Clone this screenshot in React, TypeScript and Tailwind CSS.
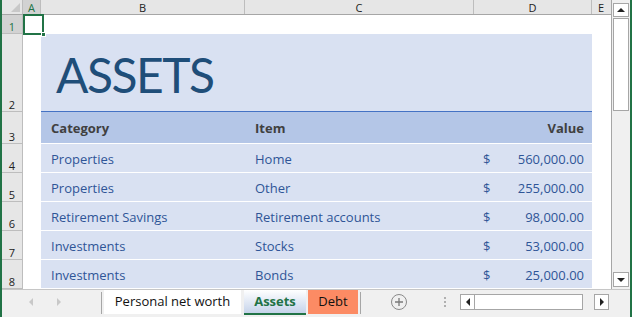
import React from "react";

const rows = [
  { n: 4, c: "Properties", i: "Home", v: "560,000.00" },
  { n: 5, c: "Properties", i: "Other", v: "255,000.00" },
  { n: 6, c: "Retirement Savings", i: "Retirement accounts", v: "98,000.00" },
  { n: 7, c: "Investments", i: "Stocks", v: "53,000.00" },
  { n: 8, c: "Investments", i: "Bonds", v: "25,000.00" },
];

function RowHead({ n, h, sel }: { n: number; h: string; sel?: boolean }) {
  return (
    <div
      className={`${h} w-[21px] shrink-0 flex items-end justify-center pb-[1px] border-r border-b border-[#bdbdbd] text-[11px] leading-none ${
        sel ? "bg-[#d2d2d2] text-[#217346]" : "bg-[#e6e6e6] text-[#222]"
      }`}
    >
      {n}
    </div>
  );
}

export default function App() {
  const font = { fontFamily: '"Open Sans", "Noto Sans", sans-serif' };
  return (
    <div className="w-[632px] h-[317px] flex bg-[#217346] overflow-hidden" style={font}>
      <div className="w-[2px] shrink-0" />
      <div className="w-[628px] flex flex-col bg-[#f0f0f0]">
        <div className="h-[289px] flex">
          {/* sheet */}
          <div className="w-[610px] flex flex-col bg-white border-r border-[#a6a6a6] relative">
            {/* column headers */}
            <div className="h-[15px] flex text-[11px] leading-none bg-[#e6e6e6] border-b border-[#a6a6a6]">
              <div className="w-[21px] shrink-0 border-r border-[#bdbdbd] relative">
                <div className="absolute right-[2px] bottom-[2px] w-0 h-0 border-l-[9px] border-l-transparent border-b-[9px] border-b-[#c8c8c8]" />
              </div>
              <div className="w-[18px] shrink-0 flex items-center justify-center border-r border-[#bdbdbd] bg-[#d2d2d2] text-[#217346]">A</div>
              <div className="w-[204px] shrink-0 flex items-center justify-center border-r border-[#bdbdbd] text-[#222]">B</div>
              <div className="w-[229px] shrink-0 flex items-center justify-center border-r border-[#bdbdbd] text-[#222]">C</div>
              <div className="w-[118px] shrink-0 flex items-center justify-center border-r border-[#bdbdbd] text-[#222]">D</div>
              <div className="w-[18px] shrink-0 flex items-center justify-center text-[#222]">E</div>
            </div>
            {/* row 1 */}
            <div className="h-[19px] flex">
              <RowHead n={1} h="h-[19px]" sel />
              <div className="w-[18px]" />
            </div>
            {/* row 2 title */}
            <div className="h-[78px] flex">
              <RowHead n={2} h="h-[78px]" />
              <div className="w-[18px] shrink-0" />
              <div className="w-[551px] bg-[#d9e1f2] border-b border-[#4472c4] flex items-center pl-[15px] pt-[4px]">
                <span
                  className="text-[48px] leading-none text-[#1f4e79] tracking-[-1.5px]"
                  style={{ fontFamily: 'Lato, "Open Sans", sans-serif' }}
                >
                  ASSETS
                </span>
              </div>
            </div>
            {/* header row */}
            <div className="h-[32px] flex">
              <RowHead n={3} h="h-[32px]" />
              <div className="w-[18px] shrink-0" />
              <div className="w-[551px] bg-[#b4c6e7] border-b border-white flex items-center pt-[3px] text-[13px] font-bold text-[#404040]">
                <div className="w-[204px] pl-[10px]">Category</div>
                <div className="w-[229px] pl-[10px]">Item</div>
                <div className="w-[118px] pr-[8px] text-right">Value</div>
              </div>
            </div>
            {rows.map((r) => (
              <div key={r.n} className="h-[29px] flex">
                <RowHead n={r.n} h="h-[29px]" />
                <div className="w-[18px] shrink-0" />
                <div className="w-[551px] bg-[#d9e1f2] border-b border-white flex items-center pt-[3px] text-[13px] text-[#2f5597]">
                  <div className="w-[204px] pl-[10px]">{r.c}</div>
                  <div className="w-[229px] pl-[10px]">{r.i}</div>
                  <div className="w-[118px] pl-[9px] pr-[8px] flex justify-between">
                    <span>$</span>
                    <span>{r.v}</span>
                  </div>
                </div>
              </div>
            ))}
            {/* selection box */}
            <div className="absolute left-[21px] top-[14px] w-[21px] h-[21px] border-2 border-[#217346]">
              <div className="absolute right-[-4px] bottom-[-4px] w-[5px] h-[5px] bg-[#217346] border border-white" />
            </div>
          </div>
          {/* vertical scrollbar */}
          <div className="w-[18px] flex flex-col items-center pt-[3px] pb-[2px] bg-[#f0f0f0]">
            <div className="w-[16px] h-[14px] bg-white border border-[#a6a6a6] flex items-center justify-center">
              <div className="w-0 h-0 border-l-[4px] border-r-[4px] border-b-[4px] border-l-transparent border-r-transparent border-b-[#222]" />
            </div>
            <div className="w-[16px] h-[93px] bg-white border border-[#a6a6a6] mt-[1px]" />
            <div className="flex-1" />
            <div className="w-[16px] h-[15px] bg-white border border-[#a6a6a6] flex items-center justify-center">
              <div className="w-0 h-0 border-l-[4px] border-r-[4px] border-t-[4px] border-l-transparent border-r-transparent border-t-[#222]" />
            </div>
          </div>
        </div>
        {/* tab bar */}
        <div className="h-[28px] flex items-start border-t border-[#c6c6c6] bg-[#f0f0f0] text-[13px]">
          <div className="w-[99px] h-[24px] flex items-center">
            <div className="ml-[27px] w-0 h-0 border-t-[4px] border-b-[4px] border-r-[4px] border-t-transparent border-b-transparent border-r-[#c8c8c8]" />
            <div className="ml-[24px] w-0 h-0 border-t-[4px] border-b-[4px] border-l-[4px] border-t-transparent border-b-transparent border-l-[#c8c8c8]" />
          </div>
          <div className="w-[1px] h-[22px] mt-[2px] bg-[#a6a6a6]" />
          <div className="ml-[2px] w-[137px] h-[24px] bg-white flex items-center justify-center text-[#111]">
            Personal net worth
          </div>
          <div className="ml-[3px] w-[62px] h-[25px] bg-gradient-to-b from-[#ffffff] to-[#c5d3ea] border-b-2 border-[#217346] flex items-center justify-center font-bold text-[#217346]">
            Assets
          </div>
          <div className="ml-[2px] w-[50px] h-[24px] bg-[#fc8b64] flex items-center justify-center text-[#111]">
            Debt
          </div>
          <div className="ml-[2px] w-[1px] h-[22px] mt-[2px] bg-[#a6a6a6]" />
          <div className="ml-[30px] mt-[4px] w-[16px] h-[16px] rounded-full border border-[#8a8a8a] flex items-center justify-center">
            <svg width="10" height="10" viewBox="0 0 10 10">
              <path d="M5 1v8M1 5h8" stroke="#7a7a7a" strokeWidth="1.3" />
            </svg>
          </div>
          <div className="ml-[37px] mt-[7px] flex flex-col gap-[2px]">
            <div className="w-[2px] h-[2px] bg-[#b0b0b0]" />
            <div className="w-[2px] h-[2px] bg-[#b0b0b0]" />
            <div className="w-[2px] h-[2px] bg-[#b0b0b0]" />
          </div>
          <div className="ml-[14px] mt-[4px] flex h-[16px]">
            <div className="w-[15px] h-[16px] bg-white border border-[#a6a6a6] flex items-center justify-center">
              <div className="w-0 h-0 border-t-[4px] border-b-[4px] border-r-[4px] border-t-transparent border-b-transparent border-r-[#222]" />
            </div>
            <div className="w-[108px] h-[16px] bg-white border-y border-r border-[#a6a6a6]" />
            <div className="w-[11px] h-[16px] bg-[#f0f0f0]" />
            <div className="w-[15px] h-[16px] bg-white border border-[#a6a6a6] flex items-center justify-center">
              <div className="w-0 h-0 border-t-[4px] border-b-[4px] border-l-[4px] border-t-transparent border-b-transparent border-l-[#222]" />
            </div>
          </div>
        </div>
      </div>
      <div className="w-[2px] shrink-0" />
    </div>
  );
}
